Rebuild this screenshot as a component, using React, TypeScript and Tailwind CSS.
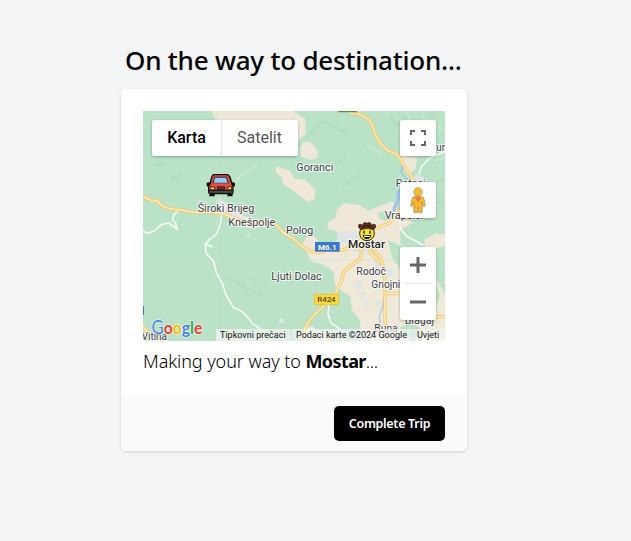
import React from "react";

type Place = { name: string; x: number; y: number; width: number; size?: number; bold?: boolean };

const places: Place[] = [
  { name: "Široki Brijeg", x: 164, y: 303, width: 170 },
  { name: "Knešpolje", x: 256, y: 346, width: 141 },
  { name: "Polog", x: 429, y: 370, width: 82 },
  { name: "Goranci", x: 460, y: 179, width: 111 },
  { name: "Ljuti Dolac", x: 385, y: 508, width: 151 },
  { name: "Mostar", x: 615, y: 410, width: 111, size: 34, bold: true },
  { name: "Rodoč", x: 640, y: 493, width: 89 },
  { name: "Gnojnice", x: 685, y: 532, width: 119 },
  { name: "Potoci", x: 758, y: 228, width: 90 },
  { name: "Vrapčići", x: 725, y: 325, width: 116 },
  { name: "Blagaj", x: 785, y: 638, width: 88 },
  { name: "Buna", x: 694, y: 663, width: 70 },
  { name: "Vitina", x: -4, y: 686, width: 76 },
  { name: "ur", x: 880, y: 120, width: 26 },
];

const mainRoads = [
  "M0 256 L22 268 L42 269 L54 282 L78 293 L120 298 L160 305 L200 303 L238 308 L262 316 L300 332 L340 340 L384 335 L402 344 L420 365 L450 382 L474 404 L500 420 L530 425 L555 415 L585 419 L606 415 L640 399 L680 361 L716 344 L740 336 L755 315 L775 293",
  "M620 4 L656 12 L680 27 L690 48 L696 70 L714 99 L735 119 L764 130 L780 160 L812 207 L826 240",
  "M656 420 L653 442 L638 454 L612 472 L601 485 L596 510 L583 535 L573 556 L548 580 L515 610 L496 634 L484 655 L480 690",
  "M674 402 L688 432 L704 445 L720 465 L725 500 L725 550 L726 610 L728 690",
  "M684 400 L698 424 L714 440 L719 462 M642 396 L638 410 L650 417 L662 412 M720 545 L758 548 L790 540 M879 618 L906 617",
  "M0 646 L14 663 L9 690",
];

const minorRoads = [
  "M0 361 L18 367 L34 359 L56 341 L78 336 L104 356 L97 336 L88 324 L94 309 L106 300",
  "M236 311 L232 340 L219 371 L199 386 L186 400 L209 407 M187 402 L189 427 L212 451 L220 485 L238 517 L248 550 L271 589 L300 603 L328 637 L365 663",
  "M827 190 L835 168 L860 140 L906 122",
  "M558 582 L555 610 L564 636 L600 660 M770 350 L790 375 L840 402",
];

function MapTerrain() {
  return (
    <svg className="absolute inset-0 h-full w-full" viewBox="0 0 906 690" fontFamily="Roboto, sans-serif">
      <rect width="906" height="690" fill="#bbe2c6" />
      <g fill="none" stroke="#a8d5b5" strokeWidth="6" opacity=".4">
        <path d="M30 165 L70 155 M80 205 L120 190 M490 80 L540 30 L620 70 M560 170 L610 135 M600 230 L650 190 M246 500 L310 520 M275 515 L355 553 M320 501 L352 516 M740 20 L810 70 M750 55 L790 15 L865 90 M835 230 L906 205 M830 250 L906 285 M760 80 L790 115" />
      </g>
      <g fill="none" stroke="#d0ead5" strokeWidth="8" opacity=".55">
        <path d="M670 100 L720 130 M840 20 L906 60 M825 260 L906 225 M275 215 L305 185 L342 161 M790 5 L840 95 M875 150 L906 140" />
      </g>
      <g fill="#efe9d9" stroke="#efe9d9" strokeWidth="4" strokeLinejoin="round">
        <path d="M208 0 L445 0 L485 25 L486 66 L464 88 L430 55 L390 30 L220 27 Z" />
        <path d="M483 94 L502 96 L522 120 L522 139 L502 144 L475 134 L474 112 Z" />
        <path d="M402 168 L440 182 L451 203 L487 209 L516 240 L511 265 L494 270 L440 229 L423 220 L420 200 L400 183 Z" />
        <path d="M555 353 L558 333 L580 320 L583 298 L605 278 L650 285 L675 302 L744 273 L761 282 L758 315 L808 334 L770 355 L770 405 L830 420 L906 554 L906 690 L655 690 L653 628 L628 595 L624 555 L579 525 L573 480 L540 459 L505 447 L480 400 L495 375 L515 380 L530 399 L560 405 L595 382 L588 360 Z" />
        <path d="M759 130 L820 144 L815 175 L795 190 Z" />
        <path d="M845 387 L879 370 L906 372 L906 403 L850 420 Z" />
        <path d="M482 690 L493 650 L510 648 L518 660 L550 665 L560 690 Z" />
        <path d="M255 304 L292 312 L345 334 L388 342 L325 350 L269 333 Z" />
      </g>
      <g fill="#bbe2c6">
        <path d="M704 305 L750 300 L753 320 L728 330 L709 323 Z" />
        <path d="M735 388 L782 409 L833 408 L846 435 L891 550 L879 590 L770 590 L772 475 L748 442 Z" />
        <path d="M770 650 L803 635 L830 650 L835 690 L800 690 Z" />
      </g>
      <g fill="#dfe4e9">
        <path d="M220 268 L232 258 L235 268 L264 280 L280 295 L298 317 L245 316 L232 290 Z" />
        <path d="M579 367 L614 360 L643 366 L650 385 L682 390 L710 430 L735 478 L730 502 L712 490 L685 435 L630 420 L600 392 L585 390 Z" />
        <path d="M818 190 L840 196 L843 208 L804 212 Z" />
        <path d="M638 516 L655 510 L657 530 L640 537 Z M650 547 L666 542 L667 557 L651 562 Z M694 574 L710 565 L713 580 L696 588 Z M664 570 L676 568 L678 584 L665 586 Z M734 478 L748 473 L752 495 L735 500 Z" />
        <path d="M307 381 L322 362 L319 378 Z M406 624 L419 620 L425 635 L413 636 Z" />
      </g>
      <path d="M778 164 L775 185 L790 204 L807 209 M774 235 L762 245 L765 268 L752 288 L758 300" fill="none" stroke="#92bdf4" strokeWidth="4" />
      <path d="M772 241 L760 280 L750 302" fill="none" stroke="#9ec4f5" strokeWidth="8" />
      <path d="M722 560 L718 592 L709 615 L712 640" fill="none" stroke="#a9cbf3" strokeWidth="4" />
      <path d="M221 0 V690 M0 447 H906" stroke="#c6e5cd" strokeWidth="2" opacity=".65" />
      {minorRoads.map((d) => (
        <path key={d} d={d} fill="none" stroke="#f5faf5" strokeWidth="5" strokeLinejoin="round" />
      ))}
      {mainRoads.map((d) => (
        <g key={d} fill="none" strokeLinejoin="round">
          <path d={d} stroke="#f3c668" strokeWidth="10" />
          <path d={d} stroke="#fdeab5" strokeWidth="5" />
        </g>
      ))}
      <path d="M585 0 H641 V4 H585 Z" fill="#5f9140" />
      <path d="M0 585 H3 V612 H0 Z" fill="#3d78d0" />
      {places.map((p) => (
        <text
          key={p.name}
          x={p.x}
          y={p.y}
          textLength={p.width}
          lengthAdjust="spacingAndGlyphs"
          fontSize={p.size ?? 32}
          fontWeight={p.bold ? 500 : 400}
          fill={p.bold ? "#202124" : "#3c4043"}
          stroke="#ffffff"
          strokeOpacity=".8"
          strokeWidth="6"
          strokeLinejoin="round"
          paintOrder="stroke"
        >
          {p.name}
        </text>
      ))}
      <rect x="516" y="393" width="74" height="29" fill="#3a78cc" />
      <text x="525" y="416" fontSize="24" fontWeight="700" fill="#fff" textLength="56">M6.1</text>
      <rect x="514" y="550" width="73" height="31" rx="2" fill="#fbd63c" stroke="#dcb935" strokeWidth="2" />
      <text x="523" y="574" fontSize="24" fontWeight="500" fill="#594a16" textLength="55">R424</text>
    </svg>
  );
}

function CarMarker() {
  return (
    <svg className="absolute left-[63px] top-[62px] h-[25px] w-[30px]" viewBox="0 0 90 75">
      <path d="M21 3 H66 L73 10 L79 28 L87 29 V38 L83 42 V60 L80 63 V70 H64 V64 H26 V70 H10 V63 L6 60 V42 L2 38 V29 L11 28 L16 10 Z" fill="#151112" />
      <path d="M23 7 H64 L69 12 L75 32 L79 40 V50 H10 V40 L15 32 L19 12 Z" fill="#e64f41" />
      <path d="M25 11 H62 L69 31 H19 Z" fill="#2b2b31" />
      <path d="M27 14 H60 L65 29 H23 Z" fill="#8fcbf7" />
      <path d="M9 53 H80 V60 H9 Z" fill="#45484a" />
      <path d="M33 40 H57 V51 H33 Z" fill="#391a16" />
      <path d="M36 43 H54 V47 H36 Z" fill="#863428" />
      <path d="M12 39 L28 42 V51 H14 Z M62 42 L77 39 V51 H62 Z" fill="#32201a" />
      <path d="M14 42 L25 44 V49 H16 Z M65 44 L75 42 V49 H65 Z" fill="#fed33f" />
    </svg>
  );
}

function CowboyMarker() {
  return (
    <svg className="absolute left-[214px] top-[111px] h-[20px] w-[20px]" viewBox="0 0 60 60">
      <circle cx="30" cy="34" r="22" fill="#f8e52e" stroke="#28200c" strokeWidth="3" />
      <path d="M21 26 V35 M39 26 V35" stroke="#171006" strokeWidth="4" />
      <path d="M17 39 H43 Q41 51 30 51 Q19 51 17 39 Z" fill="#171006" />
      <path d="M21 41 H39 V45 H21 Z" fill="#fff" />
      <path d="M5 8 Q12 5 17 10 L20 3 Q25 0 30 4 Q36 0 41 3 L44 10 Q49 5 55 8 Q58 19 49 23 Q30 16 12 23 Q3 19 5 8 Z" fill="#59301f" stroke="#2b1811" strokeWidth="2" />
      <path d="M18 14 Q30 9 43 14" fill="none" stroke="#2d150b" strokeWidth="3" />
    </svg>
  );
}

function Pegman() {
  return (
    <svg className="h-[27px] w-[18px]" viewBox="0 0 54 81">
      <path d="M16 29 H38 Q44 29 45 36 L49 56 L44 59 L39 45 V77 H29 L27 60 L25 77 H15 V45 L10 59 L5 56 L9 36 Q10 29 16 29 Z" fill="#fbb82d" stroke="#96896f" strokeWidth="2" />
      <path d="M16 31 H38 L27 45 Z" fill="#e9753d" />
      <path d="M16 47 V74 M38 47 V74" stroke="#e79b25" strokeWidth="3" />
      <circle cx="27" cy="15" r="12.5" fill="#fbbd2e" stroke="#96896f" strokeWidth="2" />
      <path d="M18 24 Q27 30 36 24" fill="none" stroke="#d08f25" strokeWidth="2" />
    </svg>
  );
}

function GoogleLogo() {
  return (
    <svg className="absolute bottom-0 left-[5px] h-[25px] w-[60px]" viewBox="0 0 60 25">
      <text
        x="3.5"
        y="18"
        textLength="51"
        lengthAdjust="spacingAndGlyphs"
        fontFamily="Lato, sans-serif"
        fontWeight="700"
        fontSize="17.5"
        stroke="#fff"
        strokeOpacity=".6"
        strokeWidth="1.6"
        paintOrder="stroke"
      >
        <tspan fill="#4285f4" fontWeight="400" fontSize="18.5">G</tspan>
        <tspan fill="#ea4335">o</tspan>
        <tspan fill="#fbbc05">o</tspan>
        <tspan fill="#4285f4">g</tspan>
        <tspan fill="#34a853">l</tspan>
        <tspan fill="#ea4335">e</tspan>
      </text>
    </svg>
  );
}

const control = "absolute bg-white shadow-[0_1px_3px_rgba(0,0,0,0.28)]";

function TripMap() {
  return (
    <div className="relative h-[230px] w-[302px] overflow-hidden font-[Roboto,sans-serif]">
      <MapTerrain />
      <CarMarker />
      <CowboyMarker />
      <div className={`${control} left-[9px] top-[9px] flex h-9 w-[146px] rounded-[2px] text-[16px] leading-9`}>
        <button className="w-[69px] text-center font-medium text-black">Karta</button>
        <button className="flex-1 border-l border-[#e6e6e6] pr-px text-center text-[#565656]">Satelit</button>
      </div>
      <button className={`${control} left-[257px] top-[9px] flex size-9 items-center justify-center rounded-[2px]`}>
        <svg className="size-[18px]" viewBox="0 0 18 18" fill="#666">
          <path d="M1 1h5v2H3v3H1zM12 1h5v5h-2V3h-3zM1 12h2v3h3v2H1zM15 12h2v5h-5v-2h3z" />
        </svg>
      </button>
      <button className={`${control} left-[257px] top-[71px] flex size-9 items-center justify-center rounded-[2px]`}>
        <Pegman />
      </button>
      <div className={`${control} left-[257px] top-[136px] flex h-[73px] w-9 flex-col items-center rounded-[2px]`}>
        <button className="flex h-9 w-9 items-center justify-center">
          <svg className="size-4" viewBox="0 0 16 16" fill="#666"><path d="M6.5 0h3v6.5H16v3H9.5V16h-3V9.5H0v-3h6.5z" /></svg>
        </button>
        <div className="h-px w-[27px] bg-[#e0e0e0]" />
        <button className="flex h-9 w-9 items-center justify-center">
          <svg className="h-[4px] w-4" viewBox="0 0 16 4" fill="#666"><path d="M0 .5h16v3H0z" /></svg>
        </button>
      </div>
      <GoogleLogo />
      <div className="absolute bottom-0 right-0 flex h-3 w-[229px] bg-[#f5f5f5]/70 text-[9px] leading-3 whitespace-nowrap text-[#111]">
        <span className="w-[75px] pl-[4px]"><span className="tracking-[0.02px]">Tipkovni prečaci</span></span>
        <span className="w-[121px] border-l border-[#d5dfd5] pl-[4px] tracking-[0.02px]">Podaci karte ©2024 Google</span>
        <span className="border-l border-[#ddd] pl-[4px]">Uvjeti</span>
      </div>
    </div>
  );
}

export default function App() {
  return (
    <main className="flex h-[541px] w-[631px] flex-col bg-[#f3f4f6] pl-[121px] pt-[42px] font-['Noto_Sans',sans-serif] text-black">
      <h1 className="h-[47px] w-[346px] pl-[4px] text-[26px] leading-9 font-medium tracking-[-0.21px] whitespace-nowrap">
        On the way to destination...
      </h1>
      <section className="h-[362px] w-[346px] overflow-hidden rounded-[5px] bg-white shadow-[0_1px_3px_rgba(0,0,0,0.14)]">
        <div className="h-[306px] px-[22px] pt-[22px]">
          <TripMap />
          <p className="mt-[6px] text-[18px] leading-7 font-light tracking-[-0.06px] whitespace-nowrap">
            Making your way to <strong className="font-bold tracking-[-0.6px]">Mostar</strong>
            <span className="tracking-[-0.4px]">...</span>
          </p>
        </div>
        <footer className="flex h-14 justify-end bg-[#f9fafb] px-[22px] pt-[11px]">
          <button className="h-[35px] w-[111px] rounded-[5px] bg-black pt-px text-[12.5px] font-semibold tracking-[-0.3px] whitespace-nowrap text-white">
            Complete Trip
          </button>
        </footer>
      </section>
    </main>
  );
}
